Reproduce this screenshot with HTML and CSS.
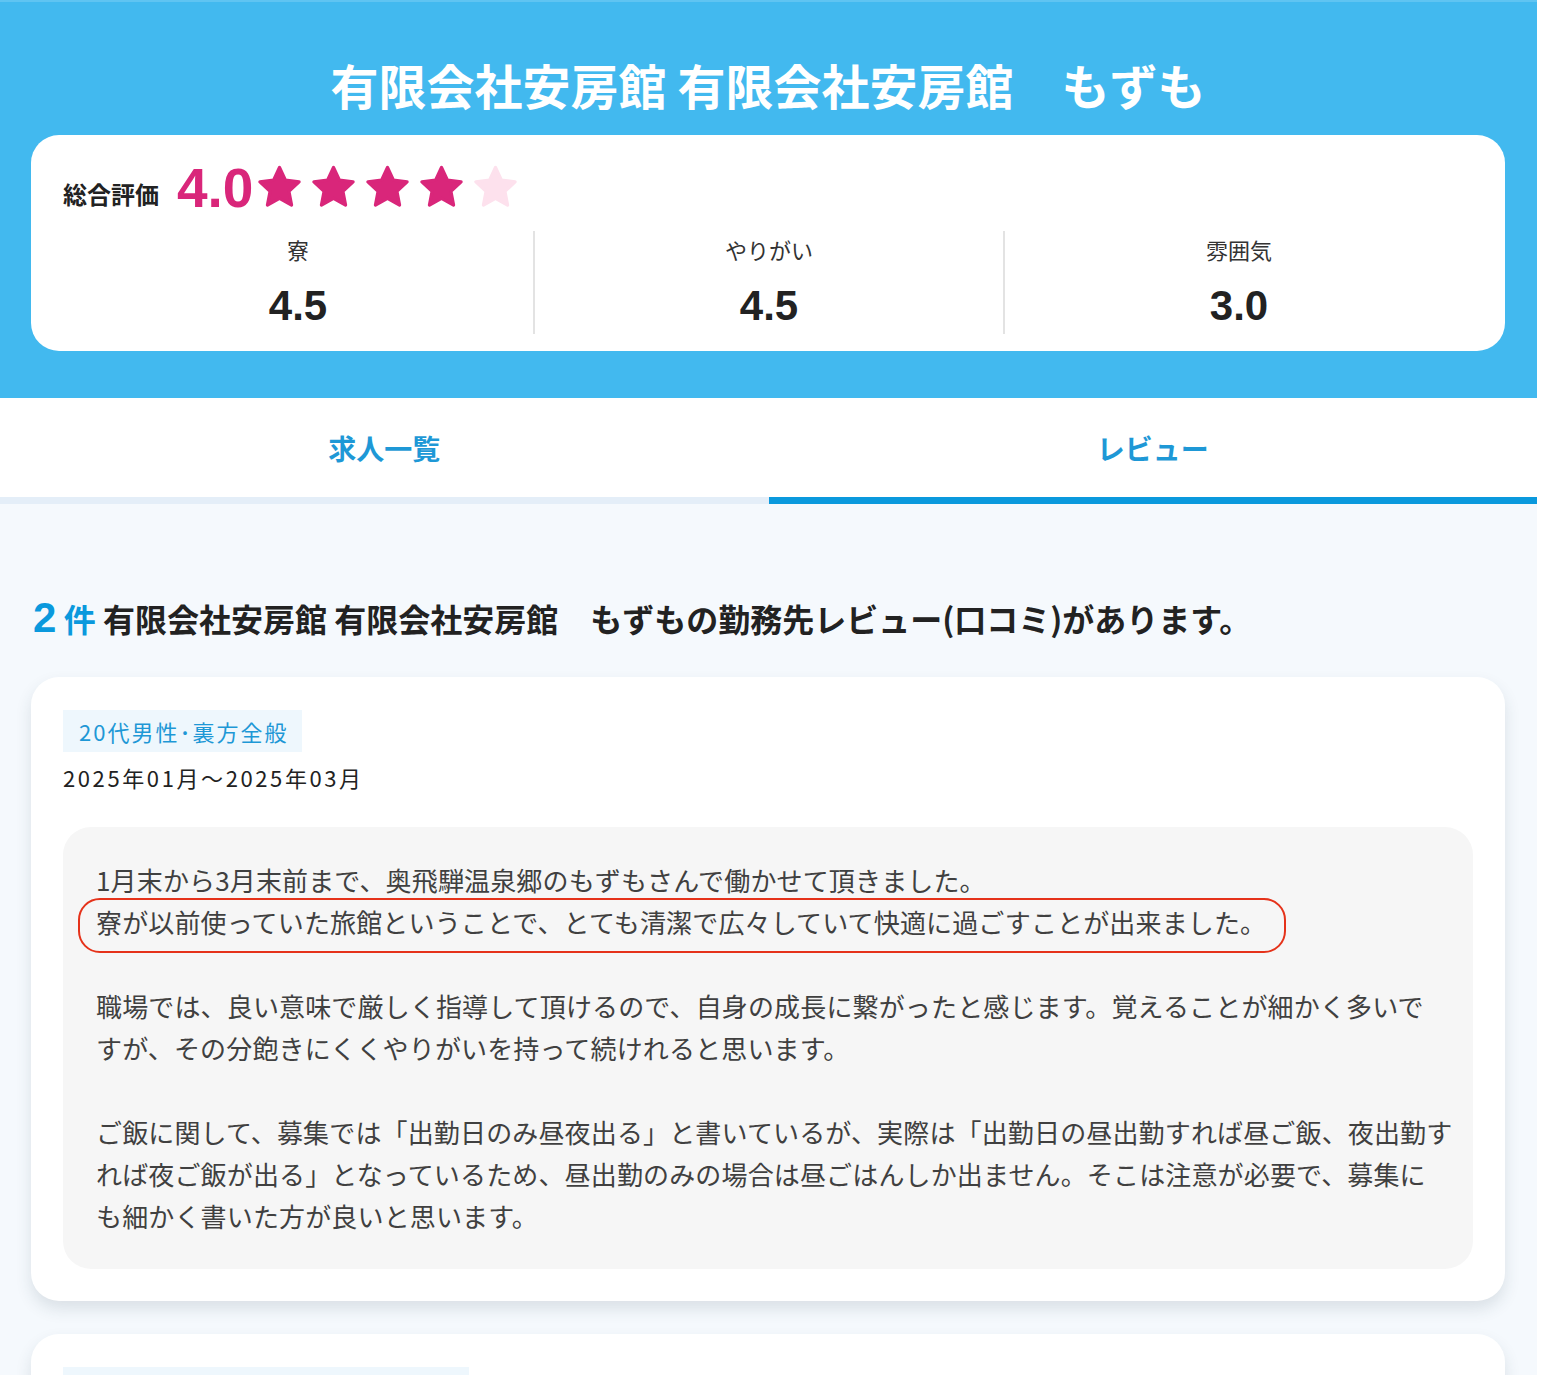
FILE: index.html
```html
<!DOCTYPE html>
<html lang="ja">
<head>
<meta charset="utf-8">
<title>有限会社安房館 有限会社安房館　もずも</title>
<link rel="stylesheet" href="styles.css">
</head>
<body>
<div class="page">
  <header class="hero">
    <h1 class="hero-title">有限会社安房館 有限会社安房館　もずも</h1>
    <section class="summary">
      <div class="overall">
        <span class="overall-label">総合評価</span>
        <span class="overall-score">4.0</span>
        <span class="stars">
          <svg class="star on" viewBox="0 0 24 24"><polygon points="12,2.2 14.9,8.4 21.6,9.2 16.6,13.9 17.9,20.6 12,17.3 6.1,20.6 7.4,13.9 2.4,9.2 9.1,8.4"/></svg>
          <svg class="star on" viewBox="0 0 24 24"><polygon points="12,2.2 14.9,8.4 21.6,9.2 16.6,13.9 17.9,20.6 12,17.3 6.1,20.6 7.4,13.9 2.4,9.2 9.1,8.4"/></svg>
          <svg class="star on" viewBox="0 0 24 24"><polygon points="12,2.2 14.9,8.4 21.6,9.2 16.6,13.9 17.9,20.6 12,17.3 6.1,20.6 7.4,13.9 2.4,9.2 9.1,8.4"/></svg>
          <svg class="star on" viewBox="0 0 24 24"><polygon points="12,2.2 14.9,8.4 21.6,9.2 16.6,13.9 17.9,20.6 12,17.3 6.1,20.6 7.4,13.9 2.4,9.2 9.1,8.4"/></svg>
          <svg class="star off" viewBox="0 0 24 24"><polygon points="12,2.2 14.9,8.4 21.6,9.2 16.6,13.9 17.9,20.6 12,17.3 6.1,20.6 7.4,13.9 2.4,9.2 9.1,8.4"/></svg>
        </span>
      </div>
      <div class="subs">
        <div class="sub">
          <div class="sub-label">寮</div>
          <div class="sub-value">4.5</div>
        </div>
        <div class="sub">
          <div class="sub-label">やりがい</div>
          <div class="sub-value">4.5</div>
        </div>
        <div class="sub">
          <div class="sub-label">雰囲気</div>
          <div class="sub-value">3.0</div>
        </div>
      </div>
    </section>
  </header>

  <nav class="tabs">
    <a class="tab">求人一覧</a>
    <a class="tab active">レビュー</a>
  </nav>

  <main class="content">
    <h2 class="count-heading"><span class="count-num">2</span> <span class="count-unit">件</span> 有限会社安房館 有限会社安房館　もずもの勤務先レビュー(口コミ)があります。</h2>

    <article class="review">
      <span class="tag">20代男性･裏方全般</span>
      <div class="period">2025年01月〜2025年03月</div>
      <div class="review-body">
        <p>1月末から3月末前まで、奥飛騨温泉郷のもずもさんで働かせて頂きました。<br><span class="mark">寮が以前使っていた旅館ということで、とても清潔で広々していて快適に過ごすことが出来ました。</span></p>
        <p>職場では、良い意味で厳しく指導して頂けるので、自身の成長に繋がったと感じます。覚えることが細かく多いで<br>すが、その分飽きにくくやりがいを持って続けれると思います。</p>
        <p>ご飯に関して、募集では「出勤日のみ昼夜出る」と書いているが、実際は「出勤日の昼出勤すれば昼ご飯、夜出勤す<br>れば夜ご飯が出る」となっているため、昼出勤のみの場合は昼ごはんしか出ません。そこは注意が必要で、募集に<br>も細かく書いた方が良いと思います。</p>
      </div>
    </article>

    <article class="review">
      <span class="tag tag-empty"></span>
    </article>
  </main>
</div>
</body>
</html>
```

FILE: styles.css
```css
* {
  box-sizing: border-box;
}

html, body {
  margin: 0;
  padding: 0;
}

body {
  background: #ffffff;
  font-family: "Noto Sans CJK JP", "Noto Sans", sans-serif;
  color: #222222;
  overflow: hidden;
}

.page {
  width: 1537px;
  background: #f5f9fd;
  min-height: 1375px;
}

/* ---------- header ---------- */
.hero {
  background: #42b9ef;
  padding: 50px 32px 47px 31px;
  border-top: 2px solid #5fc4f2;
}

.hero-title {
  margin: 0 0 19px;
  text-align: center;
  color: #ffffff;
  font-size: 48px;
  font-weight: 700;
  line-height: 64px;
}

.summary {
  background: #ffffff;
  border-radius: 28px;
  padding: 24px 32px 17px;
}

.overall {
  display: flex;
  align-items: center;
  height: 56px;
}

.overall-label {
  font-size: 24px;
  font-weight: 700;
  color: #222222;
  margin-top: 12px;
  margin-right: 18px;
}

.overall-score {
  font-family: "Liberation Sans", "Noto Sans", sans-serif;
  font-size: 55px;
  font-weight: 700;
  color: #d9267a;
  line-height: 1;
  margin-top: 2px;
  margin-right: 2px;
}

.stars {
  display: flex;
  gap: 5px;
}

.star {
  width: 49px;
  height: 49px;
}

.star polygon {
  stroke-width: 1.6;
  stroke-linejoin: round;
}

.star.on polygon {
  fill: #d9267a;
  stroke: #d9267a;
}

.star.off polygon {
  fill: #fde1ed;
  stroke: #fde1ed;
}

.subs {
  display: grid;
  grid-template-columns: 1fr 1fr 1fr;
  margin-top: 16px;
}

.sub {
  height: 103px;
  text-align: center;
  padding-top: 3px;
}

.sub + .sub {
  border-left: 2px solid #e3e3e3;
}

.sub-label {
  font-size: 22px;
  line-height: 30px;
  color: #333333;
}

.sub-value {
  font-family: "Liberation Sans", "Noto Sans", sans-serif;
  font-size: 42px;
  font-weight: 700;
  line-height: 50px;
  margin-top: 17px;
  color: #222222;
}

/* ---------- tabs ---------- */
.tabs {
  display: grid;
  grid-template-columns: 1fr 1fr;
  background: #ffffff;
}

.tab {
  display: flex;
  align-items: center;
  justify-content: center;
  height: 106px;
  font-size: 28px;
  font-weight: 700;
  color: #1e98d6;
  border-bottom: 7px solid #e4eef8;
  padding-top: 1px;
}

.tab.active {
  border-bottom-color: #0a99dd;
}

/* ---------- content ---------- */
.content {
  padding: 90px 32px 0 31px;
}

.count-heading {
  margin: 0 0 35px 2px;
  font-size: 32px;
  font-weight: 700;
  line-height: 48px;
  color: #222222;
  white-space: nowrap;
}

.count-num {
  font-family: "Liberation Sans", "Noto Sans", sans-serif;
  font-size: 42px;
  color: #0a99dd;
}

.count-unit {
  color: #0a99dd;
}

.review {
  background: #ffffff;
  border-radius: 28px;
  padding: 33px 32px 32px;
  box-shadow: 0 8px 16px rgba(40, 60, 80, 0.13);
  margin-bottom: 33px;
}

.tag {
  display: inline-block;
  background: #eef7fd;
  color: #1e98d6;
  font-size: 22px;
  line-height: 42px;
  height: 42px;
  padding: 0 14px 0 16px;
  letter-spacing: 2px;
}

.tag-empty {
  width: 406px;
}

.period {
  font-size: 22px;
  line-height: 30px;
  margin-top: 10px;
  color: #222222;
  letter-spacing: 2.6px;
}

.review-body {
  margin-top: 35px;
  background: #f6f6f6;
  border-radius: 28px;
  padding: 32px 10px 32px 33px;
  color: #404040;
  font-size: 26px;
  line-height: 42px;
  letter-spacing: 0.15px;
}

.review-body p {
  margin: 0 0 42px;
  white-space: nowrap;
}

.review-body p:last-child {
  margin-bottom: 0;
}

.mark {
  position: relative;
  display: inline-block;
}

.mark::after {
  content: "";
  position: absolute;
  left: -18px;
  right: -20px;
  top: -3px;
  bottom: -10px;
  border: 2px solid #e5321a;
  border-radius: 22px;
  pointer-events: none;
}
```
